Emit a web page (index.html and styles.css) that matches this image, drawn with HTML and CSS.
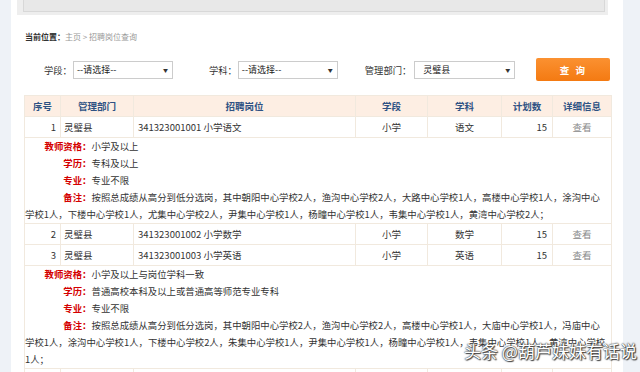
FILE: index.html
```html
<!DOCTYPE html>
<html lang="zh-CN">
<head>
  <meta charset="UTF-8" />
  <title>招聘岗位查询</title>
  <link rel="stylesheet" href="styles.css">
</head>
<body>
  <div class="page">
    <!-- TOP BOX -->
    <div class="topbox"><div class="topbox-inner"></div></div>

    <div class="crumb"><b>当前位置：</b><span>主页 &gt; 招聘岗位查询</span></div>

    <!-- FILTERS -->
    <div class="filters">
      <label class="f-label f-xd">学段：</label>
      <div class="sel"><span>--请选择--</span><i>▼</i></div>
      <label class="f-label f-xk">学科：</label>
      <div class="sel"><span>--请选择--</span><i>▼</i></div>
      <label class="f-label f-bm">管理部门：</label>
      <div class="sel sel-bm"><span>灵璧县</span><i>▼</i></div>
      <button class="btn-query">查 询</button>
    </div>

    <!-- RESULT TABLE -->
    <table class="result">
      <colgroup>
        <col style="width:36px"><col style="width:73px"><col style="width:222px">
        <col style="width:72px"><col style="width:74px"><col style="width:51px"><col style="width:59px">
      </colgroup>
      <thead>
        <tr>
          <th>序号</th><th>管理部门</th><th>招聘岗位</th><th>学段</th><th>学科</th><th>计划数</th><th>详细信息</th>
        </tr>
      </thead>
      <tbody>
        <tr>
          <td class="num">1</td><td>灵璧县</td><td class="post">341323001001 小学语文</td>
          <td class="c">小学</td><td class="c">语文</td><td class="num plan">15</td><td class="c view">查看</td>
        </tr>
        <tr>
          <td colspan="7" class="detail">
            <p><span class="lbl">教师资格：</span>小学及以上</p>
            <p><span class="lbl">学历：</span>专科及以上</p>
            <p><span class="lbl">专业：</span>专业不限</p>
            <p><span class="lbl">备注：</span>按照总成绩从高分到低分选岗，其中朝阳中心学校2人，渔沟中心学校2人，大路中心学校1人，高楼中心学校1人，涂沟中心学校1人，下楼中心学校1人，尤集中心学校2人，尹集中心学校1人，杨疃中心学校1人，韦集中心学校1人，黄湾中心学校2人；</p>
          </td>
        </tr>
        <tr>
          <td class="num">2</td><td>灵璧县</td><td class="post">341323001002 小学数学</td>
          <td class="c">小学</td><td class="c">数学</td><td class="num plan">15</td><td class="c view">查看</td>
        </tr>
        <tr>
          <td class="num">3</td><td>灵璧县</td><td class="post">341323001003 小学英语</td>
          <td class="c">小学</td><td class="c">英语</td><td class="num plan">15</td><td class="c view">查看</td>
        </tr>
        <tr>
          <td colspan="7" class="detail">
            <p><span class="lbl">教师资格：</span>小学及以上与岗位学科一致</p>
            <p><span class="lbl">学历：</span>普通高校本科及以上或普通高等师范专业专科</p>
            <p><span class="lbl">专业：</span>专业不限</p>
            <p><span class="lbl">备注：</span>按照总成绩从高分到低分选岗，其中朝阳中心学校2人，渔沟中心学校2人，高楼中心学校1人，大庙中心学校1人，冯庙中心学校1人，涂沟中心学校1人，下楼中心学校2人，朱集中心学校1人，尹集中心学校1人，杨疃中心学校1人，韦集中心学校1人，黄湾中心学校1人；</p>
          </td>
        </tr>
        <tr>
          <td class="num"></td><td></td><td></td><td></td><td></td><td></td><td></td>
        </tr>
      </tbody>
    </table>
  </div>

  <div class="watermark">头条 @葫芦妹妹有话说</div>
</body>
</html>
```

FILE: styles.css
```css
body {
  margin: 0;
  background: #eef2f7;
  font-family: "Noto Sans CJK SC", "Noto Sans", sans-serif;
  color: #333;
  overflow: hidden;
}
.page {
  margin-left: 11px;
  width: 612px;
  height: 372px;
  background: #fff;
  overflow: hidden;
}
.topbox {
  margin: 0 15px 0 6px;
  height: 15px;
  background: #eeeeee;
  padding: 0 3px 3px 6px;
  box-sizing: border-box;
}
.topbox-inner {
  height: 12px;
  background: #e8e8e8;
  border: 1px solid #d8d8d8;
  border-top: none;
  box-sizing: border-box;
}
.crumb {
  margin-top: 17px;
  padding-left: 14px;
  font-size: 8px;
  line-height: 10px;
}
.crumb b {
  color: #333;
}
.crumb span {
  color: #999;
}
.filters {
  display: flex;
  align-items: center;
  margin-top: 16px;
  height: 23px;
  font-size: 9.3px;
}
.f-label {
  color: #333;
}
.f-xd {
  margin-left: 33px;
}
.f-xk {
  margin-left: 36px;
}
.f-bm {
  margin-left: 27px;
}
.sel {
  width: 100px;
  height: 18px;
  border: 1px solid #ccc;
  box-sizing: border-box;
  display: flex;
  align-items: center;
  justify-content: space-between;
  padding: 0 4px 0 3px;
  font-size: 9px;
  color: #222;
  margin-left: 1px;
}
.sel i {
  font-style: normal;
  font-size: 5px;
  color: #333;
}
.sel-bm {
  width: 101px;
  margin-left: 3px;
}
.sel-bm span {
  padding-left: 5px;
}
.btn-query {
  margin-left: 21px;
  width: 74px;
  height: 23px;
  border: none;
  border-radius: 2px;
  background: linear-gradient(#fb9131, #f47a12);
  color: #fff;
  font-family: inherit;
  font-size: 9.5px;
  font-weight: bold;
  letter-spacing: 2px;
}
.result {
  margin: 14px 0 0 13px;
  width: 587px;
  border-collapse: collapse;
  table-layout: fixed;
  font-size: 9.5px;
}
.result th,
.result td {
  border: 1px solid #f1e9de;
  height: 20px;
  padding: 0 3px;
  line-height: 14px;
  white-space: nowrap;
}
.result th {
  background: #fdeee3;
  color: #2f5283;
  font-weight: bold;
  text-align: center;
}
.result .num {
  text-align: right;
  padding-right: 4px;
}
.result .plan {
  padding-right: 5px;
}
.result .post {
  padding-left: 4px;
}
.result .c {
  text-align: center;
}
.result .view {
  color: #888;
}
.result td.detail {
  white-space: normal;
  padding: 0 3.5px 0 0;
  height: auto;
  font-size: 9.4px;
}
.detail p {
  margin: 0;
  line-height: 17px;
}
.lbl {
  display: inline-block;
  width: 66.5px;
  text-align: right;
  color: #d40000;
  font-weight: bold;
}
.watermark {
  position: absolute;
  left: 464px;
  top: 339px;
  white-space: nowrap;
  font-size: 17px;
  line-height: 24px;
  color: #fff;
  text-shadow: 0 0 2px #333, 0 0 1px #333, 1px 1px 1px #444;
}
```
